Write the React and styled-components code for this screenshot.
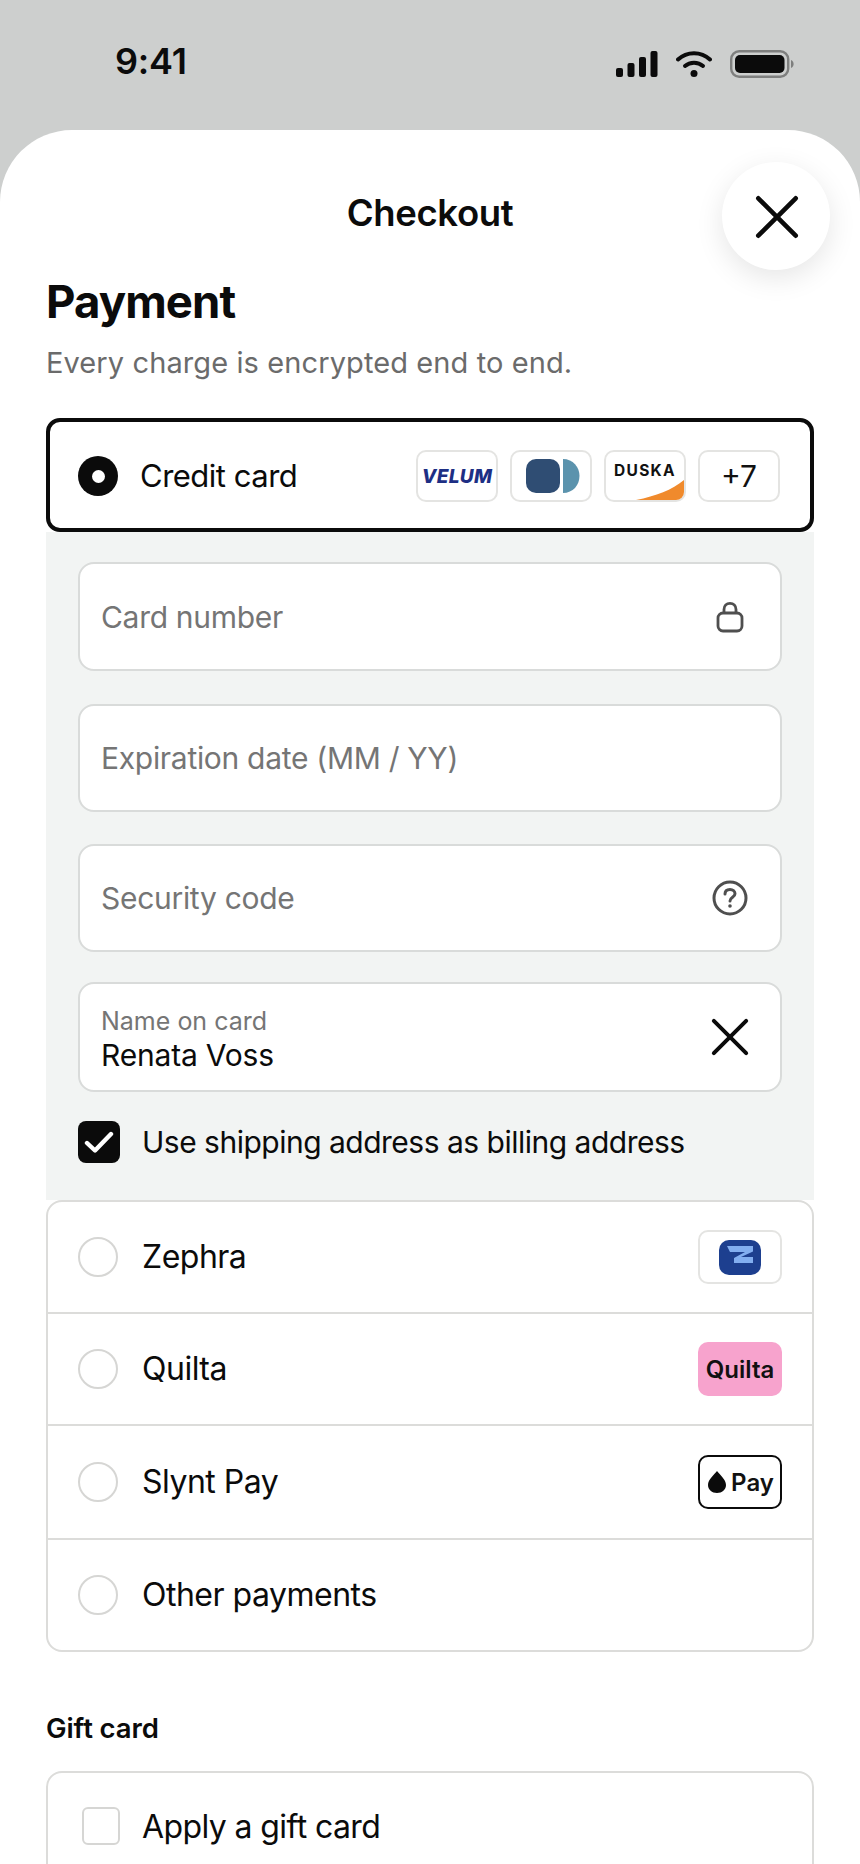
import React from 'react';
import styled, { createGlobalStyle } from 'styled-components';

const GlobalStyle = createGlobalStyle`
  html, body {
    margin: 0;
    padding: 0;
    height: 1864px;
    overflow: hidden;
    background: #cdcfce;
    font-family: Inter, "Liberation Sans", sans-serif;
    color: #0b0b0b;
  }
  * { box-sizing: border-box; }
`;

const Page = styled.div`
  width: 860px;
  height: 1864px;
  overflow: hidden;
`;

const StatusBar = styled.div`
  height: 130px;
  padding: 40px 66px 0 115px;
  display: flex;
  justify-content: space-between;
  align-items: flex-start;
`;

const Clock = styled.div`
  font-size: 36px;
  line-height: 43px;
  font-weight: 600;
  letter-spacing: -0.2px;
`;

const StatusIcons = styled.div`
  display: flex;
  align-items: center;
  gap: 18px;
  margin-top: 10px;
`;

const Sheet = styled.div`
  position: relative;
  background: #fff;
  border-radius: 72px 72px 0 0;
  padding: 0 46px;
  height: 1734px;
`;

const Title = styled.div`
  height: 116px;
  padding-top: 61px;
  text-align: center;
  font-size: 36.5px;
  line-height: 44px;
  font-weight: 600;
  letter-spacing: -0.4px;
`;

const CloseButton = styled.div`
  position: absolute;
  top: 32px;
  right: 30px;
  width: 108px;
  height: 108px;
  padding: 2px 0 0 2px;
  border-radius: 50%;
  background: #fff;
  box-shadow: 0 8px 28px rgba(0, 0, 0, 0.1);
  display: flex;
  align-items: center;
  justify-content: center;
`;

const Heading = styled.h1`
  margin: 31px 0 0;
  font-size: 45.5px;
  line-height: 50px;
  font-weight: 700;
  letter-spacing: -0.9px;
`;

const Subtitle = styled.p`
  margin: 18px 0 37px;
  font-size: 29px;
  line-height: 36px;
  letter-spacing: 0.1px;
  color: #6b6b6b;
`;

const SelectedRow = styled.div`
  height: 114px;
  border: 4px solid #0b0b0b;
  border-radius: 14px;
  padding: 2px 30px 0 28px;
  display: flex;
  align-items: center;
`;

const RadioOn = styled.div`
  width: 40px;
  height: 40px;
  border-radius: 50%;
  background: #0b0b0b;
  display: flex;
  align-items: center;
  justify-content: center;
  margin-right: 22px;
  &::after {
    content: '';
    width: 13px;
    height: 13px;
    border-radius: 50%;
    background: #fff;
  }
`;

const RadioOff = styled.div`
  width: 40px;
  height: 40px;
  border-radius: 50%;
  border: 2px solid #d6d6d4;
  background: #fff;
  margin-right: 24px;
`;

const SelectedLabel = styled.div`
  flex: 1;
  font-size: 31px;
  line-height: 38px;
  letter-spacing: -0.5px;
`;

const RowLabel = styled.div`
  flex: 1;
  font-size: 32px;
  line-height: 38px;
  letter-spacing: -0.5px;
`;

const Badges = styled.div`
  display: flex;
  gap: 12px;
`;

const Badge = styled.div`
  position: relative;
  width: 82px;
  height: 52px;
  border: 2px solid #e4e4e2;
  border-radius: 10px;
  background: #fff;
  overflow: hidden;
  display: flex;
  align-items: center;
  justify-content: center;
`;

const VelumText = styled.span`
  font-size: 19px;
  font-weight: 800;
  font-style: italic;
  color: #1d2f84;
  letter-spacing: 0.3px;
`;

const DuskaText = styled.span`
  position: absolute;
  top: 9px;
  left: 0;
  right: 0;
  text-align: center;
  font-size: 15.5px;
  font-weight: 700;
  letter-spacing: 1.3px;
  color: #111;
`;

const MoreText = styled.span`
  font-size: 30px;
  color: #111;
`;

const Panel = styled.div`
  background: #f2f4f3;
  padding: 30px 32px 0;
  height: 668px;
`;

const Field = styled.div`
  height: ${(p) => p.$h}px;
  margin-bottom: ${(p) => p.$gap}px;
  border: 2px solid #d9dbda;
  border-radius: 16px;
  background: #fff;
  padding: 0 26px 0 21px;
  display: flex;
  align-items: center;
  justify-content: space-between;
`;

const Placeholder = styled.div`
  font-size: 30px;
  letter-spacing: -0.3px;
  color: #757575;
`;

const FilledField = styled.div`
  display: flex;
  flex-direction: column;
  gap: 2px;
  padding-top: 5px;
`;

const SmallLabel = styled.div`
  font-size: 25px;
  line-height: 28px;
  color: #757575;
`;

const FilledValue = styled.div`
  font-size: 30px;
  line-height: 36px;
  letter-spacing: -0.2px;
  color: #0b0b0b;
`;

const FieldIcon = styled.div`
  width: 48px;
  display: flex;
  justify-content: center;
`;

const CheckRow = styled.div`
  display: flex;
  align-items: center;
  gap: 22px;
  margin-top: 29px;
  font-size: 30px;
  letter-spacing: -0.5px;
`;

const CheckBox = styled.div`
  width: 42px;
  height: 42px;
  border-radius: 8px;
  background: #0b0b0b;
  display: flex;
  align-items: center;
  justify-content: center;
`;

const MethodList = styled.div`
  border: 2px solid #dcdcda;
  border-radius: 16px;
`;

const MethodRow = styled.div`
  height: ${(p) => p.$h}px;
  padding: 0 30px;
  display: flex;
  align-items: center;
  border-bottom: ${(p) => (p.$last ? 'none' : '2px solid #dcdcda')};
`;

const MethodBadge = styled.div`
  width: 84px;
  height: 54px;
  padding-left: ${(p) => p.$shift || 0}px;
  border-radius: 10px;
  display: flex;
  align-items: center;
  justify-content: center;
  gap: 5px;
  background: ${(p) => p.$bg || '#fff'};
  border: ${(p) => p.$border || 'none'};
  font-size: 24px;
  font-weight: 600;
  color: #111;
`;

const SectionLabel = styled.div`
  margin: 60px 0 27px;
  font-size: 27.5px;
  line-height: 32px;
  font-weight: 600;
  letter-spacing: -0.1px;
`;

const GiftCard = styled.div`
  height: 200px;
  border: 2px solid #dcdcda;
  border-radius: 16px;
  padding: 34px 34px 0 34px;
  display: flex;
  align-items: flex-start;
  gap: 22px;
  font-size: 32px;
  letter-spacing: -0.6px;
`;

const EmptyBox = styled.div`
  width: 38px;
  height: 38px;
  border: 2px solid #d6d6d4;
  border-radius: 6px;
`;

const DualWrap = styled.div`
  margin-left: 4px;
  display: flex;
`;

const Cross = ({ size, width }) => (
  <svg width={size} height={size} viewBox="0 0 40 40" fill="none" stroke="#0b0b0b" strokeWidth={width} strokeLinecap="round">
    <path d="M3 3 L37 37 M37 3 L3 37" />
  </svg>
);

const Signal = () => (
  <svg width="42" height="26" viewBox="0 0 42 26" fill="#0b0b0b">
    <rect x="0" y="17" width="7" height="9" rx="2" />
    <rect x="11.5" y="12" width="7" height="14" rx="2" />
    <rect x="23" y="6" width="7" height="20" rx="2" />
    <rect x="34.5" y="0" width="7" height="26" rx="2" />
  </svg>
);

const Wifi = () => (
  <svg width="36" height="26" viewBox="0 0 36 26" fill="none" stroke="#0b0b0b" strokeWidth="4" strokeLinecap="round">
    <path d="M2 8.5 C11 0 25 0 34 8.5" />
    <path d="M9 15 C14 10.5 22 10.5 27 15" />
    <circle cx="18" cy="22.5" r="3.5" fill="#0b0b0b" stroke="none" />
  </svg>
);

const Battery = () => (
  <svg width="64" height="28" viewBox="0 0 64 28">
    <rect x="1.2" y="1.2" width="57" height="25.6" rx="8" fill="none" stroke="#7e7f7e" strokeWidth="2.4" />
    <rect x="5" y="5" width="49.5" height="18" rx="5" fill="#0b0b0b" />
    <path d="M61 10 C63 11 63.6 12.5 63.6 14 C63.6 15.5 63 17 61 18 Z" fill="#7e7f7e" />
  </svg>
);

const Lock = () => (
  <svg width="28" height="32" viewBox="0 0 28 32" fill="none" stroke="#4f4f4f" strokeWidth="2.8">
    <rect x="2" y="12" width="24" height="18" rx="5" />
    <path d="M8 12 V8.5 C8 4.8 10.5 2.4 14 2.4 C17.5 2.4 20 4.8 20 8.5 V12" />
  </svg>
);

const Help = () => (
  <svg width="36" height="36" viewBox="0 0 36 36" fill="none" stroke="#4f4f4f" strokeWidth="3" strokeLinecap="round">
    <circle cx="18" cy="18" r="16" />
    <path d="M13 14 C13 11 15.2 9.5 18 9.5 C20.8 9.5 23 11.2 23 13.8 C23 17.4 18 17.2 18 21" />
    <circle cx="18" cy="26" r="1.8" fill="#4f4f4f" stroke="none" />
  </svg>
);

const Check = () => (
  <svg width="30" height="24" viewBox="0 0 30 24" fill="none" stroke="#fff" strokeWidth="4.4" strokeLinecap="round" strokeLinejoin="round">
    <path d="M3 13 L11 20.5 L27 4" />
  </svg>
);

const DualMark = () => (
  <svg width="54" height="34" viewBox="0 0 54 34">
    <rect x="0" y="0" width="34" height="34" rx="10" fill="#2f4d73" />
    <path d="M37 0 C47 0 53.5 8 53.5 17 C53.5 26 47 34 37 34 Z" fill="#5b93ad" />
  </svg>
);

const DuskaSwoosh = () => (
  <svg width="78" height="24" viewBox="0 0 78 24" style={{ position: 'absolute', right: 0, bottom: 0 }}>
    <path d="M30 24 C50 20 66 14 78 4 V24 Z" fill="#f08a2c" />
  </svg>
);

const ZephraMark = () => (
  <svg width="42" height="35" viewBox="0 0 42 35">
    <rect width="42" height="35" rx="10" fill="#1d3f8f" />
    <path d="M8 6 H34 V11.5 L22 17 H34 V23 H15 V18 L26 12 H11 Z" fill="#82aef0" />
  </svg>
);

const Drop = () => (
  <svg width="18" height="22" viewBox="0 0 18 22" fill="#0b0b0b">
    <path d="M9 0 C12 4 18 8.5 18 14 C18 18.5 14 22 9 22 C4 22 0 18.5 0 14 C0 8.5 6 4 9 0 Z" />
  </svg>
);

export default function App() {
  return (
    <Page>
      <GlobalStyle />
      <StatusBar>
        <Clock>9:41</Clock>
        <StatusIcons>
          <Signal />
          <Wifi />
          <Battery />
        </StatusIcons>
      </StatusBar>
      <Sheet>
        <Title>Checkout</Title>
        <CloseButton>
          <Cross size={44} width={4.2} />
        </CloseButton>
        <Heading>Payment</Heading>
        <Subtitle>Every charge is encrypted end to end.</Subtitle>

        <SelectedRow>
          <RadioOn />
          <SelectedLabel>Credit card</SelectedLabel>
          <Badges>
            <Badge><VelumText>VELUM</VelumText></Badge>
            <Badge><DualWrap><DualMark /></DualWrap></Badge>
            <Badge><DuskaText>DUSKA</DuskaText><DuskaSwoosh /></Badge>
            <Badge><MoreText>+7</MoreText></Badge>
          </Badges>
        </SelectedRow>

        <Panel>
          <Field $h={109} $gap={33}>
            <Placeholder>Card number</Placeholder>
            <FieldIcon><Lock /></FieldIcon>
          </Field>
          <Field $h={108} $gap={32}>
            <Placeholder>Expiration date (MM / YY)</Placeholder>
          </Field>
          <Field $h={108} $gap={30}>
            <Placeholder>Security code</Placeholder>
            <FieldIcon><Help /></FieldIcon>
          </Field>
          <Field $h={110} $gap={0}>
            <FilledField>
              <SmallLabel>Name on card</SmallLabel>
              <FilledValue>Renata Voss</FilledValue>
            </FilledField>
            <FieldIcon><Cross size={38} width={4.2} /></FieldIcon>
          </Field>
          <CheckRow>
            <CheckBox><Check /></CheckBox>
            Use shipping address as billing address
          </CheckRow>
        </Panel>

        <MethodList>
          <MethodRow $h={112}>
            <RadioOff />
            <RowLabel>Zephra</RowLabel>
            <MethodBadge $border="2px solid #e4e4e2"><ZephraMark /></MethodBadge>
          </MethodRow>
          <MethodRow $h={112}>
            <RadioOff />
            <RowLabel>Quilta</RowLabel>
            <MethodBadge $bg="#f7a3cd">Quilta</MethodBadge>
          </MethodRow>
          <MethodRow $h={114}>
            <RadioOff />
            <RowLabel>Slynt Pay</RowLabel>
            <MethodBadge $border="2px solid #0b0b0b" $shift={2}><Drop />Pay</MethodBadge>
          </MethodRow>
          <MethodRow $h={110} $last>
            <RadioOff />
            <RowLabel>Other payments</RowLabel>
          </MethodRow>
        </MethodList>

        <SectionLabel>Gift card</SectionLabel>
        <GiftCard>
          <EmptyBox />
          Apply a gift card
        </GiftCard>
      </Sheet>
    </Page>
  );
}
